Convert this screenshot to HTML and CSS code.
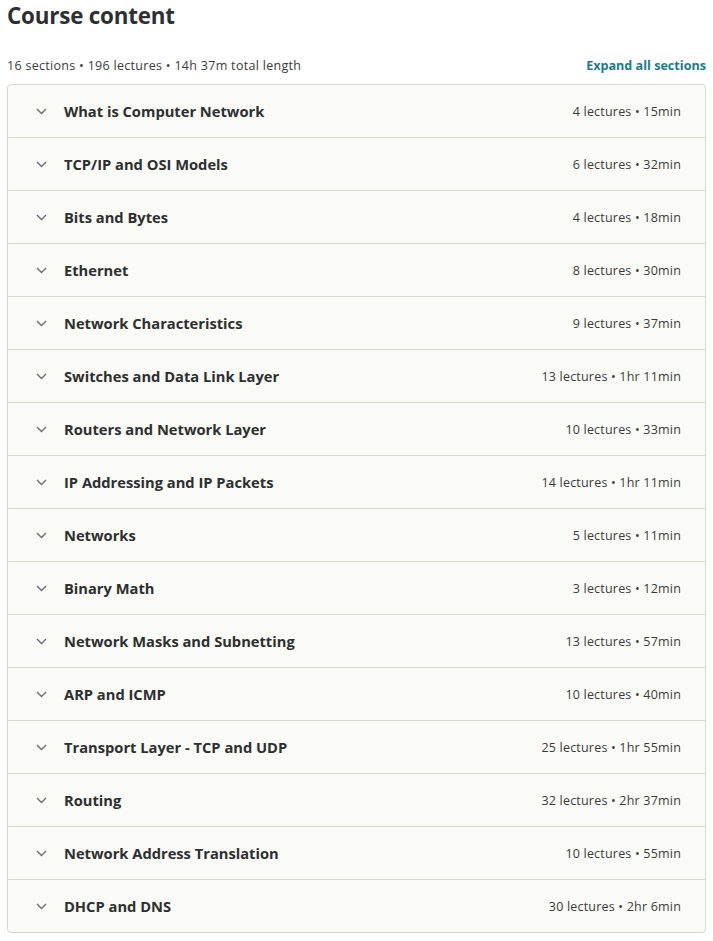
FILE: index.html
```html
<!DOCTYPE html>
<html lang="en">
<head>
<meta charset="utf-8">
<title>Course content</title>
<link rel="stylesheet" href="styles.css">
</head>
<body>
<div class="course">
  <h2 class="title">Course content</h2>
  <div class="meta">
    <span class="stats">16 sections • 196 lectures • 14h 37m total length</span>
    <button class="expand">Expand all sections</button>
  </div>
  <div class="panel">
    <div class="row"><span class="chev"><svg width="11" height="7" viewBox="0 0 11 7"><path d="M1 1l4.5 4.5L10 1" fill="none" stroke="currentColor" stroke-width="1.4"/></svg></span><span class="name">What is Computer Network</span><span class="info">4 lectures • 15min</span></div>
    <div class="row"><span class="chev"><svg width="11" height="7" viewBox="0 0 11 7"><path d="M1 1l4.5 4.5L10 1" fill="none" stroke="currentColor" stroke-width="1.4"/></svg></span><span class="name">TCP/IP and OSI Models</span><span class="info">6 lectures • 32min</span></div>
    <div class="row"><span class="chev"><svg width="11" height="7" viewBox="0 0 11 7"><path d="M1 1l4.5 4.5L10 1" fill="none" stroke="currentColor" stroke-width="1.4"/></svg></span><span class="name">Bits and Bytes</span><span class="info">4 lectures • 18min</span></div>
    <div class="row"><span class="chev"><svg width="11" height="7" viewBox="0 0 11 7"><path d="M1 1l4.5 4.5L10 1" fill="none" stroke="currentColor" stroke-width="1.4"/></svg></span><span class="name">Ethernet</span><span class="info">8 lectures • 30min</span></div>
    <div class="row"><span class="chev"><svg width="11" height="7" viewBox="0 0 11 7"><path d="M1 1l4.5 4.5L10 1" fill="none" stroke="currentColor" stroke-width="1.4"/></svg></span><span class="name">Network Characteristics</span><span class="info">9 lectures • 37min</span></div>
    <div class="row"><span class="chev"><svg width="11" height="7" viewBox="0 0 11 7"><path d="M1 1l4.5 4.5L10 1" fill="none" stroke="currentColor" stroke-width="1.4"/></svg></span><span class="name">Switches and Data Link Layer</span><span class="info">13 lectures • 1hr 11min</span></div>
    <div class="row"><span class="chev"><svg width="11" height="7" viewBox="0 0 11 7"><path d="M1 1l4.5 4.5L10 1" fill="none" stroke="currentColor" stroke-width="1.4"/></svg></span><span class="name">Routers and Network Layer</span><span class="info">10 lectures • 33min</span></div>
    <div class="row"><span class="chev"><svg width="11" height="7" viewBox="0 0 11 7"><path d="M1 1l4.5 4.5L10 1" fill="none" stroke="currentColor" stroke-width="1.4"/></svg></span><span class="name">IP Addressing and IP Packets</span><span class="info">14 lectures • 1hr 11min</span></div>
    <div class="row"><span class="chev"><svg width="11" height="7" viewBox="0 0 11 7"><path d="M1 1l4.5 4.5L10 1" fill="none" stroke="currentColor" stroke-width="1.4"/></svg></span><span class="name">Networks</span><span class="info">5 lectures • 11min</span></div>
    <div class="row"><span class="chev"><svg width="11" height="7" viewBox="0 0 11 7"><path d="M1 1l4.5 4.5L10 1" fill="none" stroke="currentColor" stroke-width="1.4"/></svg></span><span class="name">Binary Math</span><span class="info">3 lectures • 12min</span></div>
    <div class="row"><span class="chev"><svg width="11" height="7" viewBox="0 0 11 7"><path d="M1 1l4.5 4.5L10 1" fill="none" stroke="currentColor" stroke-width="1.4"/></svg></span><span class="name">Network Masks and Subnetting</span><span class="info">13 lectures • 57min</span></div>
    <div class="row"><span class="chev"><svg width="11" height="7" viewBox="0 0 11 7"><path d="M1 1l4.5 4.5L10 1" fill="none" stroke="currentColor" stroke-width="1.4"/></svg></span><span class="name">ARP and ICMP</span><span class="info">10 lectures • 40min</span></div>
    <div class="row"><span class="chev"><svg width="11" height="7" viewBox="0 0 11 7"><path d="M1 1l4.5 4.5L10 1" fill="none" stroke="currentColor" stroke-width="1.4"/></svg></span><span class="name">Transport Layer - TCP and UDP</span><span class="info">25 lectures • 1hr 55min</span></div>
    <div class="row"><span class="chev"><svg width="11" height="7" viewBox="0 0 11 7"><path d="M1 1l4.5 4.5L10 1" fill="none" stroke="currentColor" stroke-width="1.4"/></svg></span><span class="name">Routing</span><span class="info">32 lectures • 2hr 37min</span></div>
    <div class="row"><span class="chev"><svg width="11" height="7" viewBox="0 0 11 7"><path d="M1 1l4.5 4.5L10 1" fill="none" stroke="currentColor" stroke-width="1.4"/></svg></span><span class="name">Network Address Translation</span><span class="info">10 lectures • 55min</span></div>
    <div class="row"><span class="chev"><svg width="11" height="7" viewBox="0 0 11 7"><path d="M1 1l4.5 4.5L10 1" fill="none" stroke="currentColor" stroke-width="1.4"/></svg></span><span class="name">DHCP and DNS</span><span class="info">30 lectures • 2hr 6min</span></div>
  </div>
</div>
</body>
</html>
```
FILE: styles.css
```css
* { box-sizing: border-box; }
html, body { margin: 0; padding: 0; background: #ffffff; }
body {
  font-family: "Open Sans", "Noto Sans", sans-serif;
  color: #2d2f31;
}
.course {
  padding: 0 7px 0 7px;
}
.title {
  margin: 0;
  font-size: 22.4px;
  line-height: 32px;
  font-weight: 700;
  color: #2d2f31;
  letter-spacing: -0.2px;
}
.meta {
  display: flex;
  justify-content: space-between;
  align-items: center;
  margin-top: 23px;
  height: 20px;
  margin-bottom: 9px;
}
.stats {
  font-size: 12.5px;
  letter-spacing: 0.3px;
  color: #3a3b3c;
}
.expand {
  border: 0;
  background: none;
  padding: 0;
  font-family: inherit;
  font-size: 12.6px;
  font-weight: 700;
  color: #1e7a87;
  cursor: pointer;
}
.panel {
  border: 1px solid #d9d9cc;
  border-radius: 4px;
  overflow: hidden;
  background: #fafaf6;
}
.row {
  display: flex;
  align-items: center;
  height: 53px;
  border-top: 1px solid #d9d9cc;
  padding: 0 24px 0 0;
}
.row:first-child { border-top: 0; height: 52px; }
.chev {
  width: 56px;
  display: flex;
  justify-content: flex-end;
  padding-right: 17px;
  color: #6a6f73;
}
.chev svg { display: block; }
.name {
  flex: 1;
  font-size: 14.7px;
  font-weight: 700;
  color: #2d2f31;
}
.info {
  font-size: 12.5px;
  letter-spacing: 0.2px;
  color: #3a3b3c;
}
```
